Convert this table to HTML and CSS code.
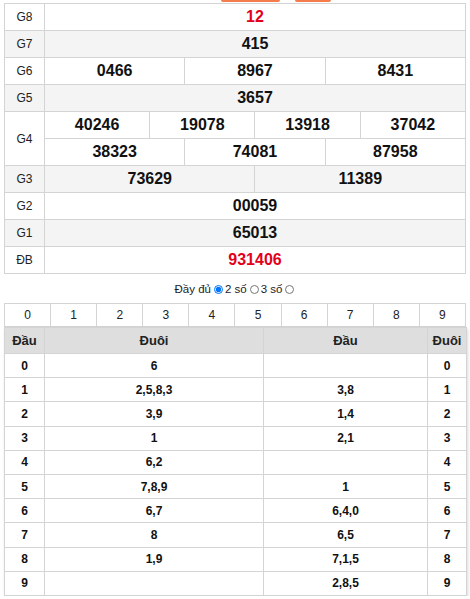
FILE: index.html
```html
<!DOCTYPE html>
<html lang="vi">
<head>
<meta charset="utf-8">
<link rel="stylesheet" href="styles.css">
</head>
<body>
<div class="page">
  <div class="tabs"><span class="tab tab-a"></span><span class="tab tab-b"></span></div>
  <table class="kq">
    <colgroup><col class="c-lbl"><col span="12"></colgroup>
    <tr><td class="lbl">G8</td><td colspan="12" class="num red">12</td></tr>
    <tr class="alt"><td class="lbl">G7</td><td colspan="12" class="num">415</td></tr>
    <tr><td class="lbl">G6</td><td colspan="4" class="num">0466</td><td colspan="4" class="num">8967</td><td colspan="4" class="num">8431</td></tr>
    <tr class="alt"><td class="lbl">G5</td><td colspan="12" class="num">3657</td></tr>
    <tr><td class="lbl" rowspan="2">G4</td><td colspan="3" class="num">40246</td><td colspan="3" class="num">19078</td><td colspan="3" class="num">13918</td><td colspan="3" class="num">37042</td></tr>
    <tr><td colspan="4" class="num">38323</td><td colspan="4" class="num">74081</td><td colspan="4" class="num">87958</td></tr>
    <tr class="alt"><td class="lbl">G3</td><td colspan="6" class="num">73629</td><td colspan="6" class="num">11389</td></tr>
    <tr><td class="lbl">G2</td><td colspan="12" class="num">00059</td></tr>
    <tr class="alt"><td class="lbl">G1</td><td colspan="12" class="num">65013</td></tr>
    <tr><td class="lbl">ĐB</td><td colspan="12" class="num red">931406</td></tr>
  </table>
  <div class="opts">
    <span>Đầy đủ</span><input type="radio" name="v" checked><span>2 số</span><input type="radio" name="v"><span>3 số</span><input type="radio" name="v">
  </div>
  <table class="digits">
    <tr><td>0</td><td>1</td><td>2</td><td>3</td><td>4</td><td>5</td><td>6</td><td>7</td><td>8</td><td>9</td></tr>
  </table>
  <table class="loto">
    <colgroup><col class="l1"><col class="l2"><col class="l3"><col class="l4"></colgroup>
    <tr class="head"><th>Đầu</th><th>Đuôi</th><th>Đầu</th><th>Đuôi</th></tr>
    <tr><td>0</td><td>6</td><td></td><td>0</td></tr>
    <tr><td>1</td><td>2,5,8,3</td><td>3,8</td><td>1</td></tr>
    <tr><td>2</td><td>3,9</td><td>1,4</td><td>2</td></tr>
    <tr><td>3</td><td>1</td><td>2,1</td><td>3</td></tr>
    <tr><td>4</td><td>6,2</td><td></td><td>4</td></tr>
    <tr><td>5</td><td>7,8,9</td><td>1</td><td>5</td></tr>
    <tr><td>6</td><td>6,7</td><td>6,4,0</td><td>6</td></tr>
    <tr><td>7</td><td>8</td><td>6,5</td><td>7</td></tr>
    <tr><td>8</td><td>1,9</td><td>7,1,5</td><td>8</td></tr>
    <tr><td>9</td><td></td><td>2,8,5</td><td>9</td></tr>
  </table>
</div>
</body>
</html>
```
FILE: styles.css
```css
* { box-sizing: border-box; }
html, body { margin: 0; padding: 0; background: #fff; }
body { font-family: "Liberation Sans", Arial, sans-serif; color: #111; }
.page { width: 470px; padding: 0 4px; }
.tabs { height: 3px; display: flex; gap: 15px; padding-left: 217px; overflow: hidden; }
.tab { display: block; height: 2px; background: #f47b4b; border-radius: 0 0 10px 10px; }
.tab-a { width: 59px; }
.tab-b { width: 36px; }
table { border-collapse: collapse; width: 462px; table-layout: fixed; }
td, th { border: 1px solid #d4d4d4; text-align: center; padding: 0; }
.kq .c-lbl { width: 40px; }
.kq tr { height: 27px; }
.kq .alt td { background: #f4f4f4; }
.kq .lbl { font-size: 12px; color: #222; }
.kq .num { font-size: 16px; font-weight: bold; color: #111; }
.kq .red { color: #e3001b; }
.opts { height: 29px; display: flex; align-items: center; justify-content: center; font-size: 11.5px; color: #222; padding-top: 1px; padding-left: 1px; }
.opts input { width: 9px; height: 9px; margin: 0 2px 0 3px; }
.digits td { height: 23px; font-size: 12px; color: #222; }
.loto .l1 { width: 40px; }
.loto .l2 { width: 219px; }
.loto .l3 { width: 164px; }
.loto .l4 { width: 39px; }
.loto { box-shadow: 1px 2px 3px rgba(0,0,0,0.15); }
.loto .head th { height: 26px; background: #dedede; font-size: 13px; font-weight: bold; color: #222; }
.loto td { height: 24.2px; font-size: 12px; font-weight: bold; color: #111; }
```
